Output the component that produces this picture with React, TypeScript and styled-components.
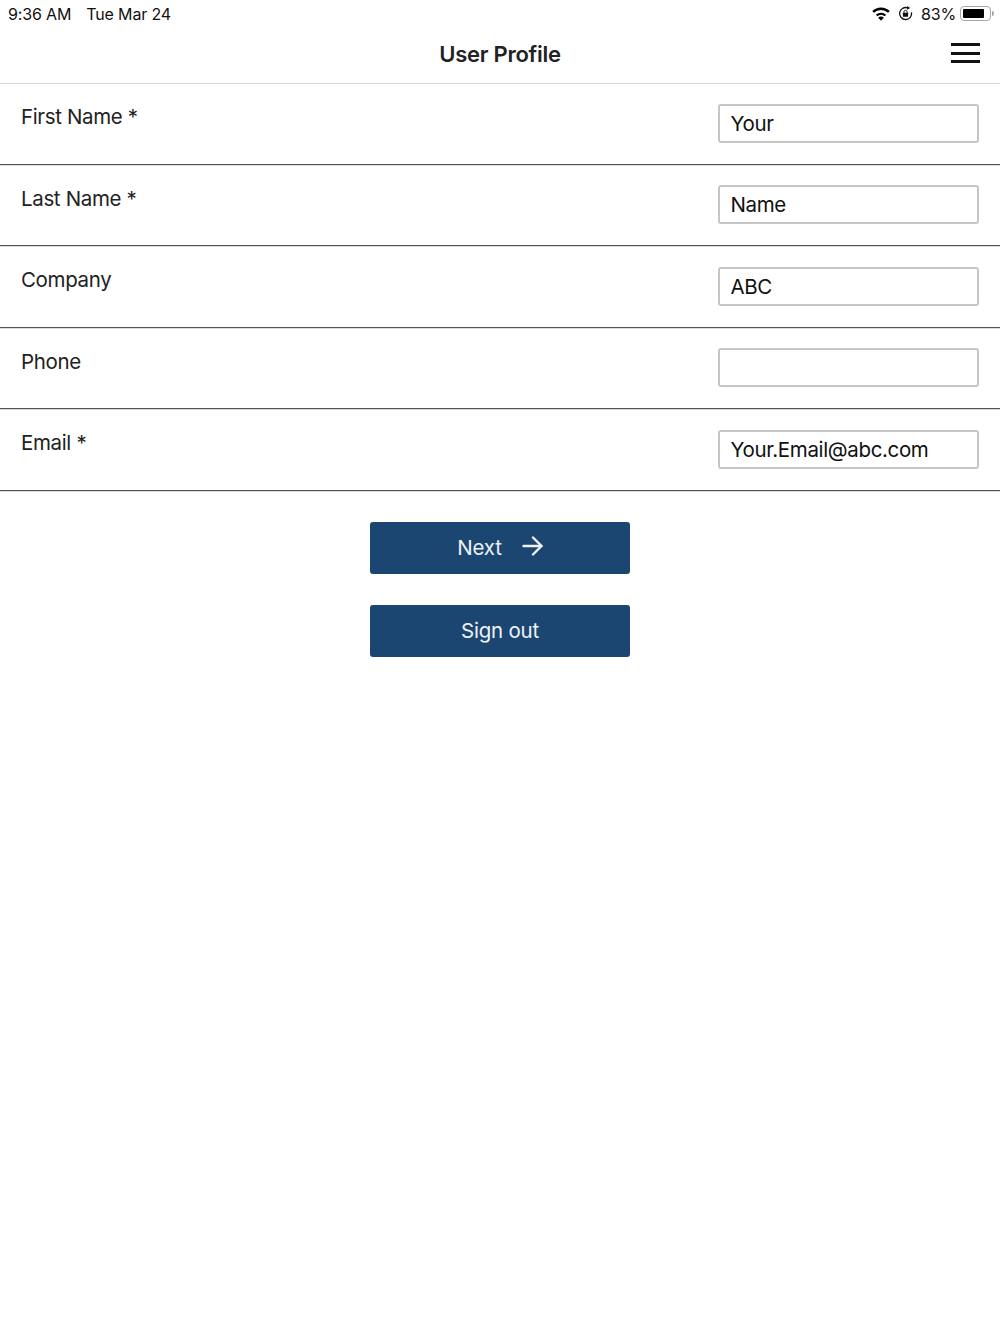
import React from 'react';
import styled, { createGlobalStyle } from 'styled-components';

const GlobalStyle = createGlobalStyle`
   html, body {
      margin: 0;
      padding: 0;
      background: #ffffff;
   }
   body {
      font-family: Inter, "Liberation Sans", sans-serif;
      color: #1b1b1d;
   }
`;

const Page = styled.div`
   width: 1000px;
   height: 1334px;
   background: #fff;
   overflow: hidden;
`;

const StatusBar = styled.div`
   height: 27px;
   padding: 0 9px 0 8px;
   box-sizing: border-box;
   display: flex;
   align-items: center;
   justify-content: space-between;
   font-size: 16px;
   color: #111;
`;

const StatusLeft = styled.div`
   display: flex;
   gap: 15px;
   letter-spacing: -0.15px;
`;

const StatusRight = styled.div`
   display: flex;
   align-items: center;
`;

const Percent = styled.span`
   margin-left: 8px;
   letter-spacing: -0.2px;
`;

const Battery = styled.div`
   width: 31px;
   height: 15px;
   margin-left: 4px;
   box-sizing: border-box;
   border: 1px solid #a8a8a8;
   border-radius: 4px;
   padding: 2px;
   position: relative;
   &::before {
      content: '';
      display: block;
      width: 83%;
      height: 100%;
      background: #000;
      border-radius: 1px;
   }
   &::after {
      content: '';
      position: absolute;
      right: -4px;
      top: 4px;
      width: 2px;
      height: 5px;
      background: #a8a8a8;
      border-radius: 0 2px 2px 0;
   }
`;

const Header = styled.header`
   height: 57px;
   box-sizing: border-box;
   border-bottom: 1px solid #d4d4d4;
   display: flex;
   align-items: center;
   justify-content: center;
   position: relative;
`;

const Title = styled.h1`
   margin: 0 0 2px;
   font-size: 22px;
   font-weight: 600;
   letter-spacing: -0.25px;
   color: #222;
`;

const Burger = styled.div`
   position: absolute;
   right: 20px;
   top: 16px;
   width: 29px;
   height: 20px;
   display: flex;
   flex-direction: column;
   justify-content: space-between;
   span {
      display: block;
      height: 3px;
      background: #111;
   }
`;

const Rows = styled.div`
   margin-top: -1px;
`;

const Row = styled.div`
   height: 81.5px;
   box-sizing: border-box;
   border-bottom: 1px solid #55505a;
   box-shadow: 0 1px 0 #dcd9dc;
   padding: 20.5px 21px 0;
   display: flex;
   justify-content: space-between;
   align-items: flex-start;
`;

const Label = styled.label`
   padding-top: 0.5px;
   font-size: 20.5px;
   letter-spacing: -0.35px;
   line-height: 26px;
   color: #222;
`;

const Field = styled.input`
   width: 261px;
   height: 39px;
   box-sizing: border-box;
   border: 2px solid #c6c6c6;
   border-radius: 3px;
   padding: 0 10.5px;
   font: 20.5px Inter, "Liberation Sans", sans-serif;
   letter-spacing: -0.35px;
   color: #111;
   background: #fff;
   outline: none;
`;

const Actions = styled.div`
   padding-top: 31px;
   display: flex;
   flex-direction: column;
   align-items: center;
   gap: 31px;
`;

const Button = styled.button`
   width: 260px;
   height: 52px;
   border: none;
   border-radius: 3px;
   background: #1c4672;
   color: #eef2f6;
   font: 20.5px Inter, "Liberation Sans", sans-serif;
   letter-spacing: -0.2px;
   display: flex;
   align-items: center;
   justify-content: center;
   gap: 20px;
   padding: 0;
`;

const ArrowBox = styled.svg`
   margin-top: -3px;
`;

const LockBox = styled.svg`
   margin-left: 8px;
`;

const WifiIcon = () => (
   <svg width="18" height="14" viewBox="0 0 18 14">
      <path d="M9 13.8 6.2 10.8a3.9 3.9 0 0 1 5.6 0Z" fill="#000" />
      <path d="M4.6 8.6a6.2 6.2 0 0 1 8.8 0" stroke="#000" strokeWidth="2.2" fill="none" />
      <path d="M1.1 4.9a11.3 11.3 0 0 1 15.8 0" stroke="#000" strokeWidth="2.4" fill="none" />
   </svg>
);

const LockIcon = () => (
   <LockBox width="15" height="15" viewBox="0 0 15 15">
      <path d="M13.5 6.4A6 6 0 1 1 9.4 1.8" stroke="#111" strokeWidth="1.3" fill="none" />
      <path d="M9 0 12.2 1.9 9 3.8Z" fill="#111" />
      <rect x="4.9" y="6.8" width="5.2" height="3.9" rx=".5" fill="#111" />
      <path d="M5.9 7V5.9a1.6 1.6 0 0 1 3.2 0V7" stroke="#111" strokeWidth=".9" fill="none" />
   </LockBox>
);

const ArrowIcon = () => (
   <ArrowBox width="21" height="20" viewBox="0 0 21 20" fill="none" stroke="#eef2f6" strokeWidth="2.4" strokeLinecap="round" strokeLinejoin="round">
      <path d="M1.5 10h18" />
      <path d="M11 1.5l8.5 8.5-8.5 8.5" />
   </ArrowBox>
);

const fields = [
   { label: 'First Name *', value: 'Your' },
   { label: 'Last Name *', value: 'Name' },
   { label: 'Company', value: 'ABC' },
   { label: 'Phone', value: '' },
   { label: 'Email *', value: 'Your.Email@abc.com' },
];

const App: React.FC = () => (
   <Page>
      <GlobalStyle />
      <StatusBar>
         <StatusLeft>
            <span>9:36 AM</span>
            <span>Tue Mar 24</span>
         </StatusLeft>
         <StatusRight>
            <WifiIcon />
            <LockIcon />
            <Percent>83%</Percent>
            <Battery />
         </StatusRight>
      </StatusBar>
      <Header>
         <Title>User Profile</Title>
         <Burger>
            <span />
            <span />
            <span />
         </Burger>
      </Header>
      <Rows>
         {fields.map(f => (
            <Row key={f.label}>
               <Label>{f.label}</Label>
               <Field defaultValue={f.value} />
            </Row>
         ))}
      </Rows>
      <Actions>
         <Button>
            Next
            <ArrowIcon />
         </Button>
         <Button>Sign out</Button>
      </Actions>
   </Page>
);

export default App;
